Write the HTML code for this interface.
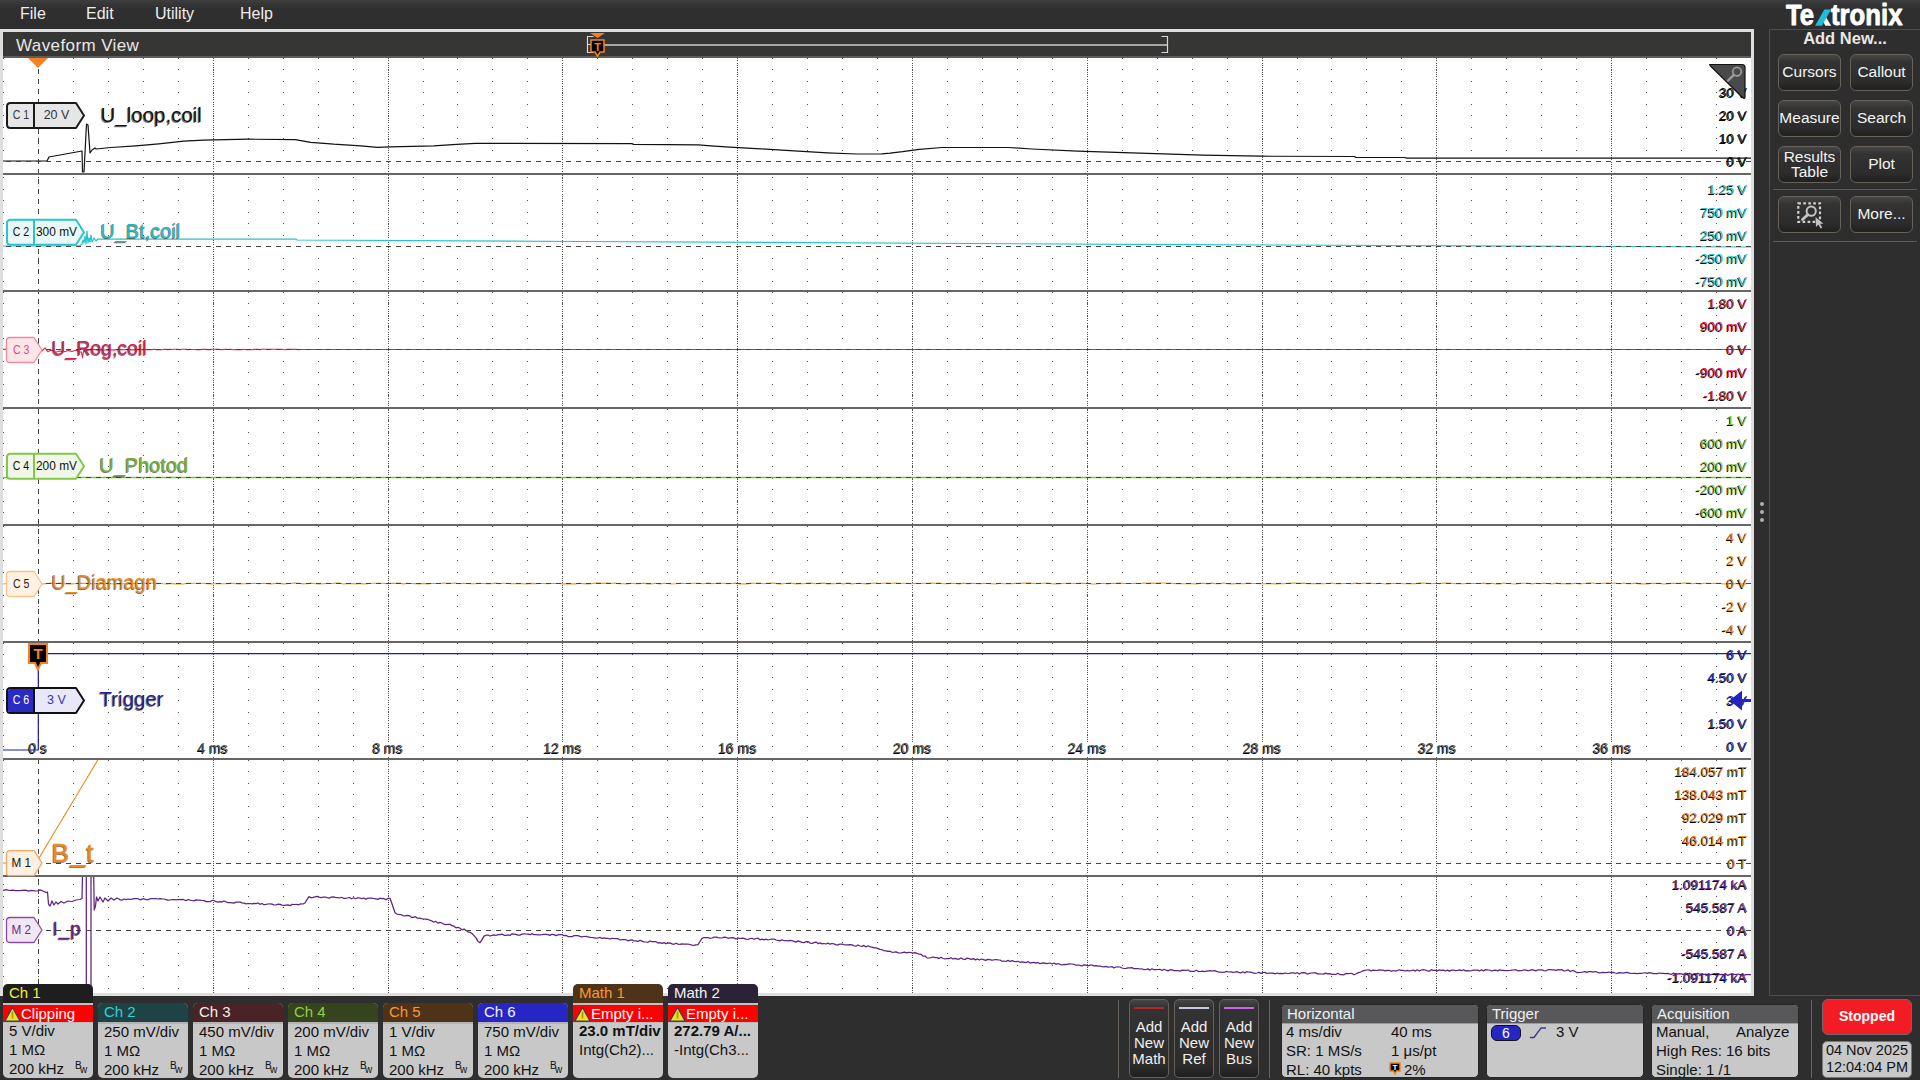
<!DOCTYPE html><html><head><meta charset="utf-8"><title>Tektronix</title><style>
*{margin:0;padding:0;box-sizing:border-box}
html,body{width:1920px;height:1080px;overflow:hidden;background:#2e2e2e;font-family:"Liberation Sans", sans-serif}
.a{position:absolute}
.menu{position:absolute;top:4px;font-size:16px;color:#eeeeee;line-height:20px}
.btn{position:absolute;border:1px solid #67615a;border-radius:6px;background:linear-gradient(#464646 0px,#333333 7px,#2c2c2c 75%,#202020 100%);color:#f4f4f4;font-size:15.5px;text-align:center;display:flex;align-items:center;justify-content:center;line-height:15px;padding-bottom:2px}
.box{position:absolute;width:90px;border-radius:5px;overflow:hidden;background:#c8c8c8}
.box .hd{height:19px;font-size:15px;line-height:19px;padding-left:6px;white-space:nowrap}
.box .ln{font-size:15px;line-height:19px;padding-left:6px;color:#111;white-space:nowrap}
.tab{position:absolute;width:90px;border-radius:5px 5px 0 0}
.ax{position:absolute;right:173px;font-size:13.5px;line-height:14px;white-space:nowrap;text-shadow:-1px 1px 0 #000}
.tl{position:absolute;font-size:14px;line-height:15px;color:#5a5a5a;white-space:nowrap;text-shadow:-1px 1px 0 #000} 
.lab{position:absolute;font-size:20px;line-height:22px;white-space:nowrap;text-shadow:-1px 1px 0 rgba(0,0,0,0.55)}
</style></head><body>
<div class="a" style="left:0;top:0;width:1920px;height:29px;background:linear-gradient(#3e3e3e 0px,#343434 5px,#2f2f2f 9px,#2e2e2e 29px)"></div>
<div class="menu" style="left:20px">File</div>
<div class="menu" style="left:86px">Edit</div>
<div class="menu" style="left:155px">Utility</div>
<div class="menu" style="left:240px">Help</div>
<div class="a" style="left:0;top:29px;width:1754px;height:967px;background:#dedede"></div>
<div class="a" style="left:3px;top:32px;width:1748px;height:24px;background:#363634"></div>
<div class="a" style="left:3px;top:56px;width:1748px;height:2px;background:#5c5c5c"></div>
<div class="a" style="left:3px;top:58px;width:1748px;height:935px;background:#ffffff"></div>
<div class="a" style="left:16px;top:35.5px;font-size:17px;line-height:20px;color:#e8e8e8;letter-spacing:0.4px">Waveform View</div>
<svg class="a" style="left:0;top:0" width="1920" height="1080" viewBox="0 0 1920 1080"><defs><clipPath id="gc"><rect x="3" y="58" width="1748" height="935"/></clipPath></defs><g clip-path="url(#gc)"><path d="M3 58.5H1751M3 69.5H1751M3 81.5H1751M3 92.5H1751M3 104.5H1751M3 115.5H1751M3 127.5H1751M3 138.5H1751M3 150.5H1751M3 173.5H1751M3 177.5H1751M3 189.5H1751M3 200.5H1751M3 212.5H1751M3 223.5H1751M3 235.5H1751M3 258.5H1751M3 269.5H1751M3 281.5H1751M3 292.5H1751M3 303.5H1751M3 315.5H1751M3 326.5H1751M3 338.5H1751M3 361.5H1751M3 372.5H1751M3 384.5H1751M3 395.5H1751M3 407.5H1751M3 409.5H1751M3 420.5H1751M3 432.5H1751M3 443.5H1751M3 455.5H1751M3 466.5H1751M3 478.5H1751M3 489.5H1751M3 501.5H1751M3 512.5H1751M3 524.5H1751M3 526.5H1751M3 537.5H1751M3 549.5H1751M3 560.5H1751M3 572.5H1751M3 595.5H1751M3 606.5H1751M3 618.5H1751M3 629.5H1751M3 641.5H1751M3 643.5H1751M3 654.5H1751M3 666.5H1751M3 677.5H1751M3 689.5H1751M3 700.5H1751M3 712.5H1751M3 723.5H1751M3 735.5H1751M3 746.5H1751M3 758.5H1751M3 760.5H1751M3 771.5H1751M3 783.5H1751M3 794.5H1751M3 806.5H1751M3 817.5H1751M3 829.5H1751M3 840.5H1751M3 852.5H1751M3 875.5H1751M3 884.5H1751M3 896.5H1751M3 907.5H1751M3 919.5H1751M3 942.5H1751M3 953.5H1751M3 965.5H1751M3 976.5H1751M3 988.5H1751" stroke="#525252" stroke-width="1" stroke-dasharray="1 33.96" fill="none" shape-rendering="crispEdges"/><path d="M213.5 58V993M388.5 58V993M562.5 58V993M737.5 58V993M912.5 58V993M1087.5 58V993M1262.5 58V993M1436.5 58V993M1611.5 58V993" stroke="#525252" stroke-width="1" stroke-dasharray="1 1.3" fill="none" shape-rendering="crispEdges"/><path d="M38.5 69V993" stroke="#444" stroke-width="1" stroke-dasharray="5 5" fill="none" shape-rendering="crispEdges"/><rect x="28.0" y="742" width="20" height="15" fill="#ffffff"/><rect x="197.4" y="742" width="31" height="15" fill="#ffffff"/><rect x="372.3" y="742" width="31" height="15" fill="#ffffff"/><rect x="543.2" y="742" width="39" height="15" fill="#ffffff"/><rect x="718.1" y="742" width="39" height="15" fill="#ffffff"/><rect x="893.0" y="742" width="39" height="15" fill="#ffffff"/><rect x="1067.9" y="742" width="39" height="15" fill="#ffffff"/><rect x="1242.8" y="742" width="39" height="15" fill="#ffffff"/><rect x="1417.7" y="742" width="39" height="15" fill="#ffffff"/><rect x="1592.6" y="742" width="39" height="15" fill="#ffffff"/><path d="M3.0 161.0 L47.0 161.0 L49.0 157.0 L82.0 151.0 L82.5 172.0 L84.0 172.0 L86.5 124.0 L88.0 125.0 L90.0 153.0 L92.0 150.0 L95.0 148.0 L96.2 149.0 L110.8 147.5 L135.8 145.8 L158.8 143.8 L183.8 141.2 L203.5 140.2 L248.3 139.2 L295.2 139.6 L310.8 142.3 L333.8 144.2 L360.8 145.8 L377.5 147.3 L390.0 146.9 L433.8 145.8 L456.7 144.4 L475.4 143.3 L490.0 143.4 L631.7 143.6 L633.8 144.4 L698.3 144.8 L710.8 145.8 L729.6 147.1 L760.8 148.8 L798.3 151.2 L827.5 152.9 L856.7 154.0 L881.7 153.8 L890.0 153.1 L902.5 151.7 L919.2 149.4 L942.0 147.5 L1008.8 147.5 L1031.7 149.0 L1077.5 151.2 L1131.7 152.9 L1202.5 155.2 L1260.8 156.2 L1354.6 156.5 L1355.6 157.3 L1404.6 157.5 L1406.7 158.1 L1752.0 158.1" stroke="#111111" stroke-width="1.2" fill="none" stroke-linejoin="round" /><path d="M3.0 246.0 L40.0 246.0 L80.0 245.5 L82.0 244.0 L83.0 240.0 L84.0 243.0 L85.0 236.0 L86.0 244.0 L87.0 231.0 L88.0 243.0 L89.0 238.0 L90.0 242.0 L91.0 235.0 L92.0 242.0 L94.0 238.0 L96.0 241.0 L98.0 239.0 L100.0 239.2 L296.0 239.2 L297.0 240.0 L580.0 241.5 L1180.0 244.6 L1752.0 247.0" stroke="#22c3cc" stroke-width="1.2" fill="none" stroke-linejoin="round" /><path d="M3.0 349.4 L5.1 349.3 L7.1 349.6 L9.2 349.2 L11.2 349.5 L13.3 349.4 L15.3 349.2 L17.4 349.5 L19.4 349.2 L21.5 349.5 L23.6 349.2 L25.6 349.3 L27.7 349.5 L29.7 349.7 L31.8 349.3 L33.8 349.3 L35.9 349.6 L37.9 349.8 L40.0 349.5 L42.0 351.0 L45.0 347.9 L48.0 351.8 L50.0 350.5 L52.0 350.2 L54.0 351.1 L56.0 352.3 L58.0 351.5 L60.0 350.9 L62.0 351.7 L64.0 351.8 L66.0 351.3 L68.0 350.6 L70.0 350.9 L72.0 351.5 L74.0 350.7 L76.0 350.2 L78.0 351.1 L80.0 352.0 L81.5 352.0 L82.5 358.0 L83.5 351.1 L87.0 350.5 L89.5 349.9 L92.0 349.6 L94.0 349.6 L96.0 349.6 L98.0 350.1 L100.0 350.1 L102.0 349.8 L104.0 350.0 L106.0 350.0 L108.0 350.1 L110.0 350.0 L112.0 349.8 L114.0 350.1 L116.0 349.6 L118.0 349.8 L120.0 350.0 L122.0 349.6 L124.0 349.8 L126.0 349.5 L128.0 349.8 L130.0 349.9 L132.0 349.7 L134.0 349.9 L136.0 349.5 L138.0 349.7 L140.0 349.7 L142.0 349.6 L144.0 349.5 L146.0 349.7 L148.0 349.8 L150.0 349.5 L152.0 349.6 L154.0 349.2 L156.0 349.6 L158.0 349.6 L160.0 349.8 L162.0 349.7 L164.0 349.4 L166.0 349.4 L168.0 349.6 L170.0 349.2 L172.0 349.5 L174.0 349.3 L176.0 349.3 L178.0 349.2 L180.0 349.7 L182.0 349.3 L184.0 349.3 L186.0 349.4 L188.0 349.7 L190.0 349.2 L192.0 349.5 L194.0 349.5 L196.0 349.7 L198.0 349.7 L200.0 349.7 L202.0 349.4 L204.0 349.4 L206.0 349.4 L208.0 349.7 L210.0 349.8 L212.0 349.3 L214.0 349.3 L216.0 349.3 L218.0 349.3 L220.0 349.5 L222.0 349.6 L224.0 349.4 L226.0 349.2 L228.0 349.5 L230.0 349.4 L232.0 349.5 L234.0 349.8 L236.0 349.6 L238.0 349.5 L240.0 349.6 L242.0 349.6 L244.0 349.2 L246.0 349.7 L248.0 349.7 L250.0 349.7 L252.0 349.7 L254.0 349.4 L256.0 349.4 L258.0 349.3 L260.0 349.6 L262.0 349.2 L264.0 349.2 L266.0 349.3 L268.0 349.3 L270.0 349.4 L272.0 349.2 L274.0 349.2 L276.0 349.3 L278.0 349.3 L280.0 349.4 L282.0 349.2 L284.0 349.7 L286.0 349.6 L288.0 349.3 L290.0 349.4 L292.0 349.4 L294.0 349.4 L296.0 349.3 L298.0 349.7 L300.0 349.5 L1752.0 349.5" stroke="#dc2a52" stroke-width="1.1" fill="none" stroke-linejoin="round" /><path d="M3.0 477.5 L1752.0 477.5" stroke="#7cc43a" stroke-width="1.3" fill="none" stroke-linejoin="round" /><path d="M3.0 584.0 L7.0 583.5 L11.0 583.5 L15.0 583.1 L19.0 583.1 L23.0 583.3 L27.0 583.3 L31.0 583.8 L35.0 583.2 L39.0 583.0 L43.0 584.0 L47.0 583.5 L51.0 583.1 L55.0 583.5 L59.0 583.0 L63.0 583.5 L67.0 584.0 L71.0 583.9 L75.0 583.7 L79.0 583.3 L83.0 583.4 L87.0 583.2 L91.1 583.8 L95.1 583.5 L99.1 583.8 L103.1 583.3 L107.1 583.2 L111.1 583.8 L115.1 584.0 L119.1 583.9 L123.1 583.8 L127.1 583.8 L131.1 583.7 L135.1 583.2 L139.1 583.5 L143.1 583.4 L147.1 583.0 L151.1 583.0 L155.1 583.3 L159.1 583.3 L163.1 583.7 L167.1 584.0 L171.1 583.4 L175.1 583.9 L179.1 584.0 L183.1 584.0 L187.1 583.4 L191.1 583.2 L195.1 583.2 L199.1 583.2 L203.1 583.2 L207.1 583.6 L211.1 583.9 L215.1 583.8 L219.1 583.5 L223.1 583.7 L227.1 583.8 L231.1 583.1 L235.1 583.7 L239.1 583.9 L243.1 583.8 L247.1 583.8 L251.1 583.5 L255.1 583.2 L259.1 583.8 L263.1 583.3 L267.2 583.8 L271.2 584.0 L275.2 583.4 L279.2 583.4 L283.2 583.9 L287.2 583.7 L291.2 583.2 L295.2 583.1 L299.2 583.2 L303.2 583.9 L307.2 583.8 L311.2 583.1 L315.2 583.8 L319.2 584.0 L323.2 583.7 L327.2 583.4 L331.2 583.5 L335.2 583.1 L339.2 583.0 L343.2 584.0 L347.2 583.6 L351.2 583.5 L355.2 583.9 L359.2 583.4 L363.2 583.9 L367.2 583.8 L371.2 583.2 L375.2 583.3 L379.2 583.3 L383.2 583.2 L387.2 583.6 L391.2 583.3 L395.2 583.4 L399.2 583.1 L403.2 583.9 L407.2 583.4 L411.2 583.5 L415.2 583.6 L419.2 583.9 L423.2 583.4 L427.2 583.9 L431.2 583.5 L435.2 583.5 L439.2 583.5 L443.3 583.0 L447.3 583.4 L451.3 583.2 L455.3 583.0 L459.3 583.8 L463.3 583.2 L467.3 583.5 L471.3 583.7 L475.3 583.6 L479.3 583.3 L483.3 583.5 L487.3 583.6 L491.3 583.8 L495.3 583.1 L499.3 583.6 L503.3 583.2 L507.3 583.3 L511.3 583.8 L515.3 583.5 L519.3 583.6 L523.3 583.8 L527.3 583.9 L531.3 583.4 L535.3 583.6 L539.3 583.5 L543.3 583.5 L547.3 583.7 L551.3 583.5 L555.3 583.5 L559.3 583.5 L563.3 583.9 L567.3 583.7 L571.3 583.9 L575.3 583.9 L579.3 583.3 L583.3 583.6 L587.3 583.9 L591.3 583.8 L595.3 583.1 L599.3 583.1 L603.3 583.4 L607.3 583.1 L611.3 583.2 L615.4 583.1 L619.4 583.7 L623.4 583.8 L627.4 583.9 L631.4 583.2 L635.4 583.7 L639.4 583.7 L643.4 583.1 L647.4 583.9 L651.4 584.0 L655.4 583.2 L659.4 584.0 L663.4 583.4 L667.4 583.5 L671.4 584.0 L675.4 583.8 L679.4 583.2 L683.4 583.4 L687.4 583.5 L691.4 583.3 L695.4 583.2 L699.4 583.3 L703.4 583.7 L707.4 583.0 L711.4 583.6 L715.4 583.4 L719.4 583.0 L723.4 583.3 L727.4 583.6 L731.4 583.5 L735.4 583.1 L739.4 584.0 L743.4 583.8 L747.4 584.0 L751.4 583.1 L755.4 583.3 L759.4 583.0 L763.4 583.8 L767.4 583.3 L771.4 583.1 L775.4 583.4 L779.4 583.9 L783.4 583.8 L787.4 583.3 L791.5 583.1 L795.5 583.9 L799.5 583.6 L803.5 583.7 L807.5 583.1 L811.5 583.1 L815.5 583.7 L819.5 583.4 L823.5 583.1 L827.5 583.9 L831.5 583.6 L835.5 583.8 L839.5 583.1 L843.5 583.9 L847.5 583.1 L851.5 583.9 L855.5 583.5 L859.5 583.3 L863.5 583.6 L867.5 583.9 L871.5 583.3 L875.5 583.1 L879.5 583.5 L883.5 583.2 L887.5 583.1 L891.5 583.2 L895.5 583.1 L899.5 583.2 L903.5 583.3 L907.5 583.3 L911.5 583.8 L915.5 583.3 L919.5 583.5 L923.5 583.2 L927.5 583.3 L931.5 583.0 L935.5 583.3 L939.5 583.0 L943.5 583.7 L947.5 583.6 L951.5 583.2 L955.5 583.5 L959.5 583.9 L963.5 583.1 L967.6 583.8 L971.6 583.4 L975.6 583.5 L979.6 583.8 L983.6 583.4 L987.6 583.5 L991.6 583.7 L995.6 584.0 L999.6 583.3 L1003.6 583.8 L1007.6 583.7 L1011.6 583.6 L1015.6 583.4 L1019.6 583.3 L1023.6 583.1 L1027.6 583.1 L1031.6 583.1 L1035.6 583.7 L1039.6 583.3 L1043.6 583.2 L1047.6 583.1 L1051.6 583.8 L1055.6 583.9 L1059.6 583.7 L1063.6 583.3 L1067.6 583.2 L1071.6 583.3 L1075.6 583.5 L1079.6 583.2 L1083.6 583.4 L1087.6 583.3 L1091.6 584.0 L1095.6 584.0 L1099.6 583.5 L1103.6 583.2 L1107.6 584.0 L1111.6 583.3 L1115.6 583.4 L1119.6 583.0 L1123.6 583.4 L1127.6 583.5 L1131.6 583.5 L1135.6 583.2 L1139.6 583.5 L1143.7 583.0 L1147.7 583.3 L1151.7 583.1 L1155.7 583.4 L1159.7 583.0 L1163.7 583.0 L1167.7 583.3 L1171.7 583.2 L1175.7 583.6 L1179.7 583.5 L1183.7 583.8 L1187.7 583.7 L1191.7 583.7 L1195.7 583.9 L1199.7 583.4 L1203.7 583.3 L1207.7 584.0 L1211.7 583.1 L1215.7 583.7 L1219.7 583.6 L1223.7 583.0 L1227.7 583.8 L1231.7 583.9 L1235.7 583.6 L1239.7 583.7 L1243.7 583.8 L1247.7 583.1 L1251.7 583.5 L1255.7 583.5 L1259.7 583.8 L1263.7 583.8 L1267.7 583.8 L1271.7 583.6 L1275.7 583.9 L1279.7 583.7 L1283.7 583.7 L1287.7 583.2 L1291.7 583.0 L1295.7 583.1 L1299.7 583.4 L1303.7 583.1 L1307.7 583.8 L1311.7 583.6 L1315.8 583.6 L1319.8 583.6 L1323.8 583.7 L1327.8 583.5 L1331.8 583.0 L1335.8 583.8 L1339.8 583.7 L1343.8 583.5 L1347.8 583.5 L1351.8 583.7 L1355.8 583.1 L1359.8 583.7 L1363.8 583.3 L1367.8 583.1 L1371.8 583.3 L1375.8 583.7 L1379.8 583.2 L1383.8 583.7 L1387.8 584.0 L1391.8 583.5 L1395.8 583.4 L1399.8 583.5 L1403.8 583.7 L1407.8 583.8 L1411.8 583.6 L1415.8 583.6 L1419.8 583.1 L1423.8 583.1 L1427.8 583.3 L1431.8 583.7 L1435.8 583.3 L1439.8 583.6 L1443.8 583.0 L1447.8 583.1 L1451.8 583.3 L1455.8 583.7 L1459.8 583.7 L1463.8 583.7 L1467.8 583.3 L1471.8 583.5 L1475.8 583.5 L1479.8 583.5 L1483.8 583.1 L1487.8 583.9 L1491.9 583.2 L1495.9 584.0 L1499.9 583.9 L1503.9 583.0 L1507.9 583.5 L1511.9 583.8 L1515.9 584.0 L1519.9 583.4 L1523.9 583.3 L1527.9 583.2 L1531.9 583.9 L1535.9 583.2 L1539.9 583.6 L1543.9 583.1 L1547.9 583.5 L1551.9 584.0 L1555.9 583.1 L1559.9 583.8 L1563.9 583.5 L1567.9 583.9 L1571.9 583.7 L1575.9 583.2 L1579.9 583.9 L1583.9 583.5 L1587.9 583.0 L1591.9 583.0 L1595.9 583.5 L1599.9 583.5 L1603.9 583.3 L1607.9 583.1 L1611.9 583.3 L1615.9 583.3 L1619.9 583.8 L1623.9 583.0 L1627.9 583.8 L1631.9 583.8 L1635.9 583.1 L1639.9 583.9 L1643.9 583.7 L1647.9 583.9 L1651.9 583.3 L1655.9 583.4 L1659.9 583.4 L1663.9 584.0 L1668.0 583.6 L1672.0 583.4 L1676.0 583.4 L1680.0 583.3 L1684.0 583.0 L1688.0 583.1 L1692.0 583.8 L1696.0 583.3 L1700.0 583.9 L1704.0 583.2 L1708.0 583.3 L1712.0 583.5 L1716.0 583.2 L1720.0 583.4 L1724.0 584.0 L1728.0 583.9 L1732.0 583.8 L1736.0 583.6 L1740.0 583.9 L1744.0 583.9 L1748.0 583.5 L1752.0 583.5" stroke="#f0962a" stroke-width="1.1" fill="none" stroke-linejoin="round" /><path d="M3.0 750.0 L38.3 750.0 L38.3 653.7 L1752.0 653.7" stroke="#1c1ca8" stroke-width="1.2" fill="none" stroke-linejoin="round" /><path d="M3.0 863.0 L36.0 863.0 L99.0 758.0" stroke="#ee8a1e" stroke-width="1.1" fill="none" stroke-linejoin="round" /><path d="M3.0 890.3 L6.2 889.6 L9.4 890.5 L12.5 890.2 L15.7 890.7 L18.9 890.6 L22.1 890.3 L25.3 890.1 L28.5 891.2 L31.6 890.4 L34.8 890.9 L38.0 891.0 L40.0 889.8 L43.0 891.0 L46.0 892.5 L47.5 892.0 L48.5 904.0 L50.0 906.0 L52.0 901.0 L54.0 905.0 L56.0 902.0 L58.0 904.0 L61.0 901.5 L64.0 903.0 L68.0 901.0 L72.0 901.5 L76.0 900.0 L80.0 899.5 L82.0 898.5 L82.5 876.0 L86.3 876.0 L86.3 995.0 L91.0 995.0 L91.0 876.0 L93.7 876.0 L94.2 910.0 L95.5 906.0 L96.5 897.0 L98.0 901.0 L100.0 897.0 L103.0 902.0 L105.0 898.0 L108.0 901.0 L111.0 898.0 L114.0 900.0 L117.0 898.0 L120.0 899.5 L120.0 899.9 L122.0 900.2 L124.0 899.0 L126.0 899.6 L128.0 899.0 L130.0 899.4 L132.0 899.1 L134.0 898.7 L136.0 898.7 L138.0 898.7 L140.0 899.8 L142.0 899.1 L144.0 898.7 L146.0 899.7 L148.0 899.8 L150.0 898.9 L152.0 898.5 L154.0 898.6 L156.0 898.5 L158.0 899.0 L160.0 898.6 L162.0 898.9 L164.0 899.0 L166.0 899.6 L168.0 900.2 L170.0 900.0 L172.0 899.5 L174.0 899.6 L176.0 899.8 L178.0 899.6 L180.0 899.6 L182.0 899.3 L184.0 899.7 L186.0 900.8 L188.0 899.5 L190.0 900.2 L192.0 900.5 L194.0 900.9 L196.0 899.9 L198.0 900.1 L200.0 900.1 L202.0 900.5 L204.0 900.6 L206.0 901.6 L208.0 901.5 L210.0 901.7 L212.0 900.4 L214.0 900.5 L216.0 901.7 L218.0 902.1 L220.0 901.6 L222.0 901.9 L224.0 901.0 L226.0 901.8 L228.0 902.7 L230.0 902.7 L232.0 902.8 L234.0 903.1 L236.0 902.1 L238.0 902.0 L240.0 902.2 L242.0 902.9 L244.0 903.2 L246.0 903.8 L248.0 903.5 L250.0 903.5 L252.0 903.8 L254.0 903.4 L256.0 903.7 L258.0 903.0 L260.0 904.3 L262.0 903.5 L264.0 904.7 L266.0 904.4 L268.0 904.0 L270.0 903.8 L272.0 904.1 L274.0 904.8 L276.0 905.0 L278.0 904.2 L280.0 904.3 L282.0 905.1 L284.0 905.3 L286.0 905.1 L288.0 904.9 L290.0 905.7 L292.1 904.4 L294.3 904.5 L296.4 904.4 L298.6 904.8 L300.7 903.9 L302.9 904.0 L305.0 903.0 L307.0 899.6 L309.0 896.6 L311.0 897.8 L313.1 897.4 L315.1 896.8 L317.1 896.4 L319.1 897.2 L321.1 897.6 L323.2 897.2 L325.2 897.0 L327.2 897.7 L329.2 898.2 L331.3 897.1 L333.3 896.9 L335.3 897.4 L337.4 897.6 L339.4 898.0 L341.4 897.3 L343.4 898.3 L345.4 898.3 L347.5 898.0 L349.5 897.5 L351.5 898.8 L353.6 897.8 L355.6 898.7 L357.6 897.8 L359.6 897.8 L361.6 898.7 L363.7 898.0 L365.7 899.1 L367.7 898.4 L369.8 898.0 L371.8 898.1 L373.8 898.5 L375.8 898.9 L377.9 899.4 L379.9 898.2 L381.9 898.6 L383.9 898.4 L385.9 899.7 L388.0 898.4 L390.0 898.3 L392.5 905.3 L395.0 912.8 L397.0 914.1 L399.1 914.5 L401.1 914.7 L403.1 915.6 L405.2 915.9 L407.2 915.4 L409.3 915.6 L411.3 917.3 L413.3 917.4 L415.4 916.7 L417.4 918.2 L419.4 918.1 L421.5 918.6 L423.5 919.0 L425.6 919.1 L427.6 919.3 L429.6 920.2 L431.7 920.8 L433.7 922.2 L435.7 921.3 L437.8 923.1 L439.8 922.3 L441.9 923.0 L443.9 924.2 L445.9 924.6 L448.0 924.4 L450.0 924.3 L452.0 925.7 L454.0 926.2 L456.0 927.8 L458.0 927.3 L460.0 928.3 L462.0 929.8 L464.0 929.1 L466.0 930.5 L468.0 931.8 L470.0 932.4 L472.0 933.5 L474.0 935.7 L476.0 937.9 L478.0 941.5 L480.0 942.6 L482.0 939.6 L484.0 936.1 L486.0 935.2 L488.0 935.0 L490.0 936.0 L492.0 935.4 L494.0 934.8 L496.0 935.5 L498.0 934.7 L500.0 934.6 L502.0 934.1 L504.0 935.3 L506.0 935.4 L508.0 934.9 L510.0 935.4 L512.0 933.8 L514.0 934.1 L516.0 934.4 L518.0 935.1 L520.0 935.1 L522.0 934.1 L524.0 933.8 L526.0 934.0 L528.0 934.1 L530.0 934.7 L532.0 933.6 L534.0 934.7 L536.0 934.7 L538.0 934.9 L540.0 934.9 L542.0 934.7 L544.0 934.4 L546.0 934.4 L548.0 934.6 L550.0 935.4 L552.0 934.3 L554.0 934.6 L556.0 935.6 L558.0 934.9 L560.0 934.7 L562.0 934.7 L564.0 935.6 L566.0 935.4 L568.0 936.5 L570.0 936.5 L572.0 936.7 L574.0 935.6 L576.0 935.5 L578.0 935.6 L580.0 936.3 L582.0 936.8 L584.0 936.5 L586.0 936.3 L588.0 936.8 L590.0 937.3 L592.0 937.5 L594.0 937.8 L596.0 938.1 L598.0 938.0 L600.0 937.3 L602.0 938.6 L604.0 937.8 L606.0 938.4 L608.0 938.3 L610.0 939.0 L612.0 938.3 L614.0 938.5 L616.0 938.7 L618.0 938.7 L620.0 940.0 L622.0 939.7 L624.0 939.5 L626.0 939.7 L628.0 940.8 L630.0 940.2 L632.0 939.9 L634.0 941.0 L636.0 940.9 L638.0 941.6 L640.0 940.3 L642.0 941.1 L644.0 941.8 L646.0 942.0 L648.0 942.3 L650.0 941.0 L652.0 941.6 L654.0 941.5 L656.0 941.7 L658.0 943.1 L660.0 942.7 L662.0 943.4 L664.0 942.6 L666.0 943.6 L668.0 943.1 L670.0 942.9 L672.0 943.9 L674.0 944.3 L676.0 943.2 L678.0 944.1 L680.0 944.3 L682.0 943.8 L684.0 944.2 L686.0 944.0 L688.0 944.2 L690.0 944.5 L692.0 945.2 L694.0 945.4 L696.0 944.9 L698.0 944.7 L700.0 941.5 L702.0 938.3 L704.0 937.5 L706.0 937.7 L708.0 937.5 L710.0 938.4 L712.0 938.0 L714.0 937.2 L716.0 937.2 L718.0 937.7 L720.0 937.9 L722.0 938.0 L724.0 937.1 L726.0 937.3 L728.0 938.3 L730.0 937.9 L732.0 937.7 L734.0 937.9 L736.0 939.0 L738.0 938.0 L740.0 938.5 L742.0 938.2 L744.0 938.4 L746.0 939.2 L748.0 939.5 L750.0 938.5 L752.0 938.3 L754.0 939.3 L756.0 938.5 L758.0 938.2 L760.0 939.8 L762.0 939.1 L764.0 939.8 L766.0 939.2 L768.0 940.0 L770.0 939.5 L772.0 939.1 L774.0 939.0 L776.0 940.0 L778.0 940.3 L780.0 940.9 L782.0 939.7 L784.0 940.7 L786.0 940.5 L788.0 940.8 L790.0 940.4 L792.0 940.7 L794.0 941.3 L796.0 942.1 L798.0 940.9 L800.0 941.6 L802.0 942.3 L804.0 942.7 L806.0 941.6 L808.0 941.6 L810.0 943.1 L812.0 943.3 L814.0 942.6 L816.0 942.1 L818.0 943.6 L820.0 942.9 L822.0 943.9 L824.0 943.5 L826.0 944.0 L828.0 943.1 L830.0 944.2 L832.0 943.5 L834.0 943.9 L836.0 944.8 L838.0 944.9 L840.0 944.0 L842.0 944.2 L844.0 944.6 L846.0 944.9 L848.0 944.9 L850.0 944.6 L852.0 944.9 L854.0 945.8 L856.0 946.2 L858.0 945.0 L860.0 946.0 L862.0 946.4 L864.0 945.4 L866.0 946.9 L868.0 945.8 L870.0 946.8 L872.0 947.2 L874.0 947.9 L876.0 947.9 L878.0 948.6 L880.0 949.4 L882.0 949.7 L884.0 950.6 L886.0 950.8 L888.0 951.4 L890.0 951.2 L892.1 952.3 L894.2 952.2 L896.2 951.9 L898.3 952.9 L900.4 953.0 L902.5 952.6 L904.5 952.2 L906.6 952.8 L908.7 952.3 L910.8 952.5 L912.8 953.1 L914.9 952.6 L917.0 953.3 L919.0 954.2 L921.0 954.3 L923.0 956.1 L925.0 956.0 L927.0 957.9 L929.0 958.0 L931.0 957.6 L933.0 957.0 L935.0 957.7 L937.0 957.6 L939.0 958.6 L941.0 957.3 L943.0 958.5 L945.0 958.8 L947.0 958.5 L949.0 958.7 L951.0 957.7 L953.0 959.0 L955.0 958.3 L957.0 959.1 L959.0 959.1 L961.0 958.0 L963.1 959.1 L965.1 959.4 L967.2 958.1 L969.2 958.7 L971.3 959.4 L973.3 958.6 L975.4 959.9 L977.4 959.0 L979.5 960.0 L981.5 959.0 L983.6 959.7 L985.6 960.4 L987.7 959.4 L989.7 959.6 L991.8 960.1 L993.8 959.9 L995.9 959.5 L997.9 959.9 L1000.0 960.0 L1002.0 961.3 L1004.0 961.0 L1006.0 961.5 L1008.0 960.4 L1010.0 961.5 L1012.0 960.6 L1014.0 961.4 L1016.0 961.7 L1018.0 961.3 L1020.0 962.3 L1022.0 961.9 L1024.0 962.1 L1026.0 962.7 L1028.0 961.5 L1030.0 963.1 L1032.0 962.6 L1034.0 962.3 L1036.0 963.1 L1038.0 962.4 L1040.0 963.7 L1042.0 963.1 L1044.0 962.9 L1046.0 963.7 L1048.0 963.3 L1050.0 963.0 L1052.0 964.0 L1054.0 963.0 L1056.0 964.3 L1058.0 963.5 L1060.0 964.3 L1062.0 965.0 L1064.0 964.4 L1066.0 964.7 L1068.0 964.2 L1070.0 963.9 L1072.0 964.0 L1074.0 964.3 L1076.0 965.2 L1078.0 965.0 L1080.0 965.3 L1082.0 966.0 L1084.0 964.9 L1086.0 965.2 L1088.0 966.0 L1090.0 965.1 L1092.0 965.2 L1094.0 965.8 L1096.0 965.6 L1098.0 966.1 L1100.0 966.0 L1102.0 966.7 L1104.0 966.8 L1106.0 966.3 L1108.0 967.1 L1110.0 967.0 L1112.0 966.6 L1114.0 968.0 L1116.0 967.0 L1118.0 966.9 L1120.0 967.0 L1122.0 968.0 L1124.0 968.5 L1126.0 968.4 L1128.0 967.9 L1130.0 967.8 L1132.0 967.6 L1134.0 968.7 L1136.0 968.7 L1138.0 968.5 L1140.0 969.0 L1142.0 968.8 L1144.0 969.7 L1146.0 969.5 L1148.0 968.9 L1150.0 970.1 L1152.0 968.8 L1154.0 969.7 L1156.0 969.6 L1158.0 969.5 L1160.0 969.3 L1162.0 970.5 L1164.0 969.3 L1166.1 970.2 L1168.1 970.9 L1170.1 969.7 L1172.1 969.8 L1174.1 970.6 L1176.2 970.5 L1178.2 970.7 L1180.2 971.1 L1182.2 970.1 L1184.2 970.4 L1186.3 970.4 L1188.3 970.0 L1190.3 971.4 L1192.3 971.3 L1194.3 971.3 L1196.4 970.2 L1198.4 971.6 L1200.4 971.5 L1202.4 971.1 L1204.4 971.6 L1206.5 971.2 L1208.5 970.9 L1210.5 970.7 L1212.5 971.0 L1214.5 970.7 L1216.5 971.3 L1218.6 972.0 L1220.6 972.0 L1222.6 972.3 L1224.6 972.1 L1226.6 971.4 L1228.7 972.0 L1230.7 971.8 L1232.7 972.4 L1234.7 972.1 L1236.7 971.7 L1238.8 972.4 L1240.8 972.9 L1242.8 971.8 L1244.8 972.9 L1246.8 971.6 L1248.9 972.0 L1250.9 972.0 L1252.9 972.9 L1254.9 973.3 L1256.9 973.0 L1259.0 972.4 L1261.0 973.4 L1263.0 972.5 L1265.0 972.4 L1267.0 973.5 L1269.1 973.1 L1271.1 973.2 L1273.1 973.2 L1275.1 973.8 L1277.2 973.0 L1279.2 973.6 L1281.2 973.4 L1283.2 973.7 L1285.2 973.0 L1287.3 973.5 L1289.3 973.3 L1291.3 972.9 L1293.3 972.8 L1295.4 973.5 L1297.4 972.7 L1299.4 974.0 L1301.4 972.8 L1303.4 972.7 L1305.5 972.8 L1307.5 974.2 L1309.5 973.3 L1311.5 973.0 L1313.6 972.8 L1315.6 972.9 L1317.6 973.9 L1319.6 973.9 L1321.6 974.0 L1323.7 974.1 L1325.7 973.1 L1327.7 973.9 L1329.7 973.6 L1331.8 974.4 L1333.8 974.4 L1335.8 974.5 L1337.8 973.3 L1339.8 974.6 L1341.9 974.7 L1343.9 974.8 L1345.9 973.4 L1347.9 973.6 L1350.0 973.5 L1352.0 973.4 L1354.0 974.8 L1356.2 973.8 L1358.5 972.6 L1360.8 972.0 L1363.0 970.8 L1365.0 970.3 L1367.0 970.0 L1369.0 969.9 L1371.0 971.0 L1373.0 970.1 L1375.1 970.3 L1377.1 970.5 L1379.1 969.8 L1381.1 970.2 L1383.1 970.2 L1385.1 970.9 L1387.1 970.3 L1389.1 970.3 L1391.1 971.3 L1393.1 970.5 L1395.2 971.1 L1397.2 970.7 L1399.2 969.8 L1401.2 970.4 L1403.2 970.4 L1405.2 971.0 L1407.2 970.3 L1409.2 970.8 L1411.2 970.6 L1413.2 970.0 L1415.3 971.1 L1417.3 969.8 L1419.3 971.0 L1421.3 970.0 L1423.3 969.7 L1425.3 970.0 L1427.3 970.9 L1429.3 971.2 L1431.3 969.7 L1433.3 970.4 L1435.4 970.4 L1437.4 970.9 L1439.4 969.9 L1441.4 970.4 L1443.4 970.2 L1445.4 971.0 L1447.4 970.1 L1449.4 971.1 L1451.4 970.1 L1453.4 970.0 L1455.5 970.7 L1457.5 970.4 L1459.5 969.8 L1461.5 970.6 L1463.5 969.7 L1465.5 970.9 L1467.5 970.7 L1469.5 970.8 L1471.5 970.6 L1473.5 970.2 L1475.6 970.2 L1477.6 970.2 L1479.6 971.0 L1481.6 969.7 L1483.6 971.0 L1485.6 969.6 L1487.6 969.9 L1489.6 970.0 L1491.6 971.0 L1493.6 970.3 L1495.7 970.1 L1497.7 970.9 L1499.7 969.9 L1501.7 970.3 L1503.7 970.4 L1505.7 970.7 L1507.7 970.7 L1509.7 970.5 L1511.7 970.1 L1513.7 970.0 L1515.8 969.7 L1517.8 970.8 L1519.8 970.6 L1521.8 970.7 L1523.8 969.8 L1525.8 970.2 L1527.8 970.7 L1529.8 970.4 L1531.8 969.7 L1533.8 970.2 L1535.9 970.9 L1537.9 969.8 L1539.9 969.8 L1541.9 969.9 L1543.9 970.6 L1545.9 970.8 L1547.9 969.7 L1549.9 969.7 L1551.9 969.8 L1553.9 969.9 L1556.0 970.3 L1558.0 969.7 L1560.0 969.9 L1562.0 969.7 L1564.0 971.0 L1566.0 970.6 L1568.2 969.9 L1570.3 971.5 L1572.5 970.5 L1574.7 971.2 L1576.8 972.5 L1579.0 972.5 L1581.0 972.4 L1583.0 972.0 L1585.0 971.6 L1587.0 972.4 L1589.1 971.5 L1591.1 971.7 L1593.1 972.1 L1595.1 971.5 L1597.1 972.2 L1599.1 972.8 L1601.1 972.7 L1603.1 972.4 L1605.2 972.7 L1607.2 972.4 L1609.2 972.0 L1611.2 972.7 L1613.2 972.4 L1615.2 973.0 L1617.2 973.3 L1619.2 972.6 L1621.2 972.9 L1623.3 973.2 L1625.3 972.7 L1627.3 972.4 L1629.3 973.2 L1631.3 973.5 L1633.3 973.4 L1635.3 973.3 L1637.3 973.6 L1639.3 973.3 L1641.4 973.3 L1643.4 973.0 L1645.4 972.9 L1647.4 973.4 L1649.4 972.6 L1651.4 973.1 L1653.4 973.7 L1655.4 973.7 L1657.5 973.6 L1659.5 973.0 L1661.5 973.3 L1663.5 973.4 L1665.5 973.7 L1667.5 973.4 L1669.5 973.9 L1671.5 974.3 L1673.5 973.1 L1675.6 973.9 L1677.6 974.2 L1679.6 973.6 L1681.6 973.8 L1683.6 974.6 L1685.6 973.1 L1687.6 974.0 L1689.6 973.4 L1691.7 974.4 L1693.7 974.7 L1695.7 974.1 L1697.7 973.4 L1699.7 974.2 L1701.7 974.2 L1703.7 974.5 L1705.7 974.2 L1707.7 974.5 L1709.8 974.8 L1711.8 974.3 L1713.8 974.2 L1715.8 975.1 L1717.8 973.9 L1719.8 974.7 L1721.8 974.3 L1723.8 974.9 L1725.8 973.9 L1727.9 975.4 L1729.9 974.4 L1731.9 973.9 L1733.9 974.3 L1735.9 974.6 L1737.9 974.0 L1739.9 974.7 L1741.9 974.7 L1744.0 975.2 L1746.0 974.7 L1748.0 974.6 L1750.0 974.5 L1752.0 975.0" stroke="#5e2282" stroke-width="1.25" fill="none" stroke-linejoin="round" /><path d="M3 161.5H1751" stroke="#444" stroke-width="1" stroke-dasharray="5 5" stroke-dashoffset="7" fill="none" shape-rendering="crispEdges"/><path d="M3 246.5H1751" stroke="#444" stroke-width="1" stroke-dasharray="5 5" stroke-dashoffset="7" fill="none" shape-rendering="crispEdges"/><path d="M3 349.5H1751" stroke="#444" stroke-width="1" stroke-dasharray="5 5" stroke-dashoffset="7" fill="none" shape-rendering="crispEdges"/><path d="M3 477.5H1751" stroke="#444" stroke-width="1" stroke-dasharray="5 5" stroke-dashoffset="7" fill="none" shape-rendering="crispEdges"/><path d="M3 583.5H1751" stroke="#444" stroke-width="1" stroke-dasharray="5 5" stroke-dashoffset="7" fill="none" shape-rendering="crispEdges"/><path d="M3 863.5H1751" stroke="#444" stroke-width="1" stroke-dasharray="5 5" stroke-dashoffset="7" fill="none" shape-rendering="crispEdges"/><path d="M3 930.5H1751" stroke="#444" stroke-width="1" stroke-dasharray="5 5" stroke-dashoffset="7" fill="none" shape-rendering="crispEdges"/><rect x="3" y="173" width="1748" height="2" fill="#666666"/><rect x="3" y="290" width="1748" height="2" fill="#666666"/><rect x="3" y="407" width="1748" height="2" fill="#666666"/><rect x="3" y="524" width="1748" height="2" fill="#666666"/><rect x="3" y="641" width="1748" height="2" fill="#666666"/><rect x="3" y="758" width="1748" height="2" fill="#666666"/><rect x="3" y="875" width="1748" height="2" fill="#666666"/></g></svg>
<svg class="a" style="left:0;top:0" width="1920" height="1080" viewBox="0 0 1920 1080"><path d="M28 58H48L38 68Z" fill="#f5821f"/><path d="M593.5 36.5H587.5V52.5H593.5M587.5 44.5H593" stroke="#d8d8d8" stroke-width="1.2" fill="none"/><rect x="593" y="44" width="574" height="2" fill="#a8a8a8"/><path d="M1161.5 36.5H1167.5V52.5H1161.5" stroke="#d8d8d8" stroke-width="1.2" fill="none"/><path d="M590 33H605L597.5 38Z" fill="#f5821f"/><path d="M591 40H604V52H600L597.5 56L595 52H591Z" fill="#000" stroke="#f5821f" stroke-width="1.5"/><text x="597.5" y="50.5" font-family="Liberation Sans" font-weight="bold" font-size="11" fill="#f5821f" text-anchor="middle">T</text><path d="M10.5 103.0H76L84 115.5L76 128.0H10.5Q7 128.0 7 124.5V106.5Q7 103.0 10.5 103.0Z" fill="#e6e6e6" stroke="#1a1a1a" stroke-width="2" stroke-linejoin="round"/><rect x="33" y="103.0" width="2" height="25" fill="#1a1a1a"/><text x="21.0" y="119.3" font-family="Liberation Sans" font-size="12.5" fill="#333" text-anchor="middle" textLength="16.5" lengthAdjust="spacingAndGlyphs">C 1</text><text x="56.5" y="119.3" font-family="Liberation Sans" font-size="12.5" fill="#333" text-anchor="middle">20 V</text><path d="M10.5 219.8H76L84 232.3L76 244.8H10.5Q7 244.8 7 241.3V223.3Q7 219.8 10.5 219.8Z" fill="#e8f8f8" stroke="#2cc4cc" stroke-width="2" stroke-linejoin="round"/><rect x="33" y="219.8" width="2" height="25" fill="#2cc4cc"/><text x="21.0" y="236.10000000000002" font-family="Liberation Sans" font-size="12.5" fill="#111" text-anchor="middle" textLength="16.5" lengthAdjust="spacingAndGlyphs">C 2</text><text x="56.5" y="236.10000000000002" font-family="Liberation Sans" font-size="12.5" fill="#111" text-anchor="middle" textLength="41" lengthAdjust="spacingAndGlyphs">300 mV</text><path d="M10.0 337.5H34.0L42.0 350L34.0 362.5H10.0Q6.5 362.5 6.5 359.0V341.0Q6.5 337.5 10.0 337.5Z" fill="#fde6ea" stroke="#f08a9c" stroke-width="1.3" stroke-linejoin="round"/><text x="21.25" y="353.8" font-family="Liberation Sans" font-size="12.5" fill="#e05070" text-anchor="middle" textLength="16.5" lengthAdjust="spacingAndGlyphs">C 3</text><path d="M10.5 453.7H76L84 466.2L76 478.7H10.5Q7 478.7 7 475.2V457.2Q7 453.7 10.5 453.7Z" fill="#f0f7e8" stroke="#84c84a" stroke-width="2" stroke-linejoin="round"/><rect x="33" y="453.7" width="2" height="25" fill="#84c84a"/><text x="21.0" y="470.0" font-family="Liberation Sans" font-size="12.5" fill="#111" text-anchor="middle" textLength="16.5" lengthAdjust="spacingAndGlyphs">C 4</text><text x="56.5" y="470.0" font-family="Liberation Sans" font-size="12.5" fill="#111" text-anchor="middle" textLength="41" lengthAdjust="spacingAndGlyphs">200 mV</text><path d="M10.0 571.5H34.0L42.0 584L34.0 596.5H10.0Q6.5 596.5 6.5 593.0V575.0Q6.5 571.5 10.0 571.5Z" fill="#fff2e4" stroke="#f8c48c" stroke-width="1.3" stroke-linejoin="round"/><text x="21.25" y="587.8" font-family="Liberation Sans" font-size="12.5" fill="#222" text-anchor="middle" textLength="16.5" lengthAdjust="spacingAndGlyphs">C 5</text><path d="M10.5 688.0H76L84 700.5L76 713.0H10.5Q7 713.0 7 709.5V691.5Q7 688.0 10.5 688.0Z" fill="#e8e8f8" stroke="#111" stroke-width="2" stroke-linejoin="round"/><path d="M10.5 689.0H34V712.0H10.5Q8 712.0 8 709.5V691.5Q8 689.0 10.5 689.0Z" fill="#2a2ac4"/><rect x="33" y="688.0" width="2" height="25" fill="#111"/><text x="21.0" y="704.3" font-family="Liberation Sans" font-size="12.5" fill="#fff" text-anchor="middle" textLength="16.5" lengthAdjust="spacingAndGlyphs">C 6</text><text x="56.5" y="704.3" font-family="Liberation Sans" font-size="12.5" fill="#3535b8" text-anchor="middle">3 V</text><path d="M10.0 850.7H34.0L42.0 863.2L34.0 875.7H10.0Q6.5 875.7 6.5 872.2V854.2Q6.5 850.7 10.0 850.7Z" fill="#fdf0e2" stroke="#f2a860" stroke-width="1.3" stroke-linejoin="round"/><text x="21.25" y="867.0" font-family="Liberation Sans" font-size="12.5" fill="#111" text-anchor="middle" textLength="19.5" lengthAdjust="spacingAndGlyphs">M 1</text><path d="M10.0 917.5H34.0L42.0 930L34.0 942.5H10.0Q6.5 942.5 6.5 939.0V921.0Q6.5 917.5 10.0 917.5Z" fill="#f0e6f4" stroke="#8a4aa8" stroke-width="1.3" stroke-linejoin="round"/><text x="21.25" y="933.8" font-family="Liberation Sans" font-size="12.5" fill="#6a2a8c" text-anchor="middle" textLength="19.5" lengthAdjust="spacingAndGlyphs">M 2</text><path d="M29 644H47V663H41L38 669.5L35 663H29Z" fill="#000" stroke="#f5821f" stroke-width="2"/><text x="38" y="659" font-family="Liberation Sans" font-weight="bold" font-size="15" fill="#f5821f" text-anchor="middle">T</text></svg>
<div class="lab" style="left:100.5px;top:103px;color:#151515;font-size:20.5px;line-height:24px">U_loop,coil</div>
<div class="lab" style="left:100.5px;top:219px;color:#22b8c4;font-size:20px;line-height:24px">U_Bt,coil</div>
<div class="lab" style="left:51.5px;top:336px;color:#d02650;font-size:19.5px;line-height:24px">U_Rog,coil</div>
<div class="lab" style="left:99.5px;top:453px;color:#74b432;font-size:20px;line-height:24px">U_Photod</div>
<div class="lab" style="left:51.5px;top:570px;color:#ec8a22;font-size:20px;line-height:24px">U_Diamagn</div>
<div class="lab" style="left:99.5px;top:687px;color:#22228a;font-size:20.5px;line-height:24px">Trigger</div>
<div class="lab" style="left:51.5px;top:841px;color:#ec8a22;font-size:26.5px;line-height:24px;-webkit-text-stroke:0.6px #ec8a22;letter-spacing:1.2px">B_t</div>
<div class="lab" style="left:52.5px;top:916.5px;color:#5e2282;font-size:19px;line-height:24px;letter-spacing:1px;-webkit-text-stroke:0.3px #5e2282">I_p</div>
<div class="ax" style="top:86px;color:#111">30 V</div>
<div class="ax" style="top:109px;color:#111">20 V</div>
<div class="ax" style="top:132px;color:#111">10 V</div>
<div class="ax" style="top:155px;color:#111">0 V</div>
<div class="ax" style="top:183px;color:#22c4cc">1.25 V</div>
<div class="ax" style="top:206px;color:#22c4cc">750 mV</div>
<div class="ax" style="top:229px;color:#22c4cc">250 mV</div>
<div class="ax" style="top:252px;color:#22c4cc">-250 mV</div>
<div class="ax" style="top:275px;color:#22c4cc">-750 mV</div>
<div class="ax" style="top:297px;color:#d8244c">1.80 V</div>
<div class="ax" style="top:320px;color:#d8244c">900 mV</div>
<div class="ax" style="top:343px;color:#d8244c">0 V</div>
<div class="ax" style="top:366px;color:#d8244c">-900 mV</div>
<div class="ax" style="top:389px;color:#d8244c">-1.80 V</div>
<div class="ax" style="top:414px;color:#7cc43a">1 V</div>
<div class="ax" style="top:437px;color:#7cc43a">600 mV</div>
<div class="ax" style="top:460px;color:#7cc43a">200 mV</div>
<div class="ax" style="top:483px;color:#7cc43a">-200 mV</div>
<div class="ax" style="top:506px;color:#7cc43a">-600 mV</div>
<div class="ax" style="top:531px;color:#f0962a">4 V</div>
<div class="ax" style="top:554px;color:#f0962a">2 V</div>
<div class="ax" style="top:577px;color:#f0962a">0 V</div>
<div class="ax" style="top:600px;color:#f0962a">-2 V</div>
<div class="ax" style="top:623px;color:#f0962a">-4 V</div>
<div class="ax" style="top:648px;color:#2a2ab0">6 V</div>
<div class="ax" style="top:671px;color:#2a2ab0">4.50 V</div>
<div class="ax" style="top:694px;color:#2a2ab0">3 V</div>
<div class="ax" style="top:717px;color:#2a2ab0">1.50 V</div>
<div class="ax" style="top:740px;color:#2a2ab0">0 V</div>
<div class="ax" style="top:765px;color:#e8841e">184.057 mT</div>
<div class="ax" style="top:788px;color:#e8841e">138.043 mT</div>
<div class="ax" style="top:811px;color:#e8841e">92.029 mT</div>
<div class="ax" style="top:834px;color:#e8841e">46.014 mT</div>
<div class="ax" style="top:857px;color:#e8841e">0 T</div>
<div class="ax" style="top:878px;color:#6a2a8c">1.091174 kA</div>
<div class="ax" style="top:901px;color:#6a2a8c">545.587 A</div>
<div class="ax" style="top:924px;color:#6a2a8c">0 A</div>
<div class="ax" style="top:947px;color:#6a2a8c">-545.587 A</div>
<div class="ax" style="top:971px;color:#6a2a8c">-1.091174 kA</div>
<svg class="a" style="left:1720px;top:685px" width="35" height="30"><path d="M9.5 15.5L22 5.5V14H31V17H22V25.5Z" fill="#2424c0"/></svg>
<svg class="a" style="left:0;top:0" width="1920" height="1080" viewBox="0 0 1920 1080"><path d="M1710 64.5H1742Q1745 64.5 1745 67.5V97Q1745 99.5 1742.5 97.5L1710.5 66Q1709 64.5 1710 64.5Z" fill="#4a4a4a" stroke="#111" stroke-width="1.2"/><circle cx="1737" cy="71.6" r="4.3" fill="none" stroke="#9a9a9a" stroke-width="1.7"/><path d="M1733.8 74.8L1728 80.6" stroke="#9a9a9a" stroke-width="2.4" stroke-linecap="round"/></svg>
<div class="tl" style="left:-2.0px;width:80px;text-align:center;top:741px"><span>0 s</span></div>
<div class="tl" style="left:172.9px;width:80px;text-align:center;top:741px"><span>4 ms</span></div>
<div class="tl" style="left:347.8px;width:80px;text-align:center;top:741px"><span>8 ms</span></div>
<div class="tl" style="left:522.7px;width:80px;text-align:center;top:741px"><span>12 ms</span></div>
<div class="tl" style="left:697.6px;width:80px;text-align:center;top:741px"><span>16 ms</span></div>
<div class="tl" style="left:872.5px;width:80px;text-align:center;top:741px"><span>20 ms</span></div>
<div class="tl" style="left:1047.4px;width:80px;text-align:center;top:741px"><span>24 ms</span></div>
<div class="tl" style="left:1222.3px;width:80px;text-align:center;top:741px"><span>28 ms</span></div>
<div class="tl" style="left:1397.2px;width:80px;text-align:center;top:741px"><span>32 ms</span></div>
<div class="tl" style="left:1572.1px;width:80px;text-align:center;top:741px"><span>36 ms</span></div>
<div class="a" style="left:1769px;top:29px;width:151px;height:967px;border-left:1px solid #4e4e4e;border-top:1px solid #4e4e4e;border-bottom:1px solid #4e4e4e"></div>
<svg class="a" style="left:1775px;top:0" width="140" height="30" viewBox="0 0 140 30"><g stroke="#fff" stroke-width="0.9" stroke-linejoin="round"><text x="11" y="25" font-family="Liberation Sans" font-weight="bold" font-size="30" fill="#ffffff" textLength="28" lengthAdjust="spacingAndGlyphs">Te</text><text x="56" y="25" font-family="Liberation Sans" font-weight="bold" font-size="30" fill="#ffffff" textLength="71.5" lengthAdjust="spacingAndGlyphs">tronix</text></g><path d="M50.6 16.4L56.2 25.8H50.4L47.4 20.6Z" fill="#ffffff"/><path d="M40.1 25.8L49.3 9.4H56L47 25.8Z" fill="#1fbcdc"/></svg>
<div class="a" style="left:1770px;top:29px;width:150px;text-align:center;font-size:16.5px;font-weight:bold;color:#e8e8e8;line-height:19px;letter-spacing:0px">Add New...</div>
<div class="btn" style="left:1778px;top:54px;width:63px;height:37px">Cursors</div>
<div class="btn" style="left:1850px;top:54px;width:63px;height:37px">Callout</div>
<div class="btn" style="left:1778px;top:100px;width:63px;height:37px">Measure</div>
<div class="btn" style="left:1850px;top:100px;width:63px;height:37px">Search</div>
<div class="btn" style="left:1778px;top:146px;width:63px;height:37px">Results<br>Table</div>
<div class="btn" style="left:1850px;top:146px;width:63px;height:37px">Plot</div>
<div class="btn" style="left:1778px;top:196px;width:63px;height:37px"></div>
<div class="btn" style="left:1850px;top:196px;width:63px;height:37px">More...</div>
<div class="a" style="left:1773px;top:189px;width:144px;height:1px;background:#5a5a5a"></div>
<div class="a" style="left:1773px;top:241px;width:144px;height:1px;background:#5a5a5a"></div>
<svg class="a" style="left:1793px;top:200px" width="34" height="30" viewBox="0 0 34 30"><rect x="5.3" y="3.3" width="21.7" height="18.5" fill="none" stroke="#cfcfcf" stroke-width="2.2" stroke-dasharray="2.6 2.4"/><circle cx="18.2" cy="11.2" r="4.6" fill="none" stroke="#c4c4c4" stroke-width="2"/><path d="M14.8 14.6L9.5 19.5" stroke="#c4c4c4" stroke-width="2.8" stroke-linecap="round"/><path d="M22.5 17L23 27L25.3 24.6L27.6 28.6L29.2 27.7L27 23.8H30.4Z" fill="#c4c4c4"/></svg>
<svg class="a" style="left:1758px;top:500px" width="8" height="26"><circle cx="4" cy="4" r="2" fill="#b0b0b0"/><circle cx="4" cy="12" r="2" fill="#b0b0b0"/><circle cx="4" cy="20" r="2" fill="#b0b0b0"/></svg>
<div class="a" style="left:3px;top:984px;width:90px;height:94px;border-radius:5px;overflow:hidden;background:#c8c8c8"><div style="height:19px;background:#1e1e1e;color:#f2f040;font-size:15px;line-height:18px;padding-left:6px;white-space:nowrap">Ch 1</div><div style="height:2px;background:#c0c0c0"></div><div style="height:17px;background:#ff0000;color:#fff;font-size:15px;line-height:18px;padding-left:18px;white-space:nowrap;overflow:hidden">Clipping</div><div style="height:1px;background:#b8b8b8;margin-bottom:-2px"></div><div style="font-size:15px;line-height:19px;padding-left:6px;color:#111;white-space:nowrap;overflow:hidden">5 V/div</div><div style="font-size:15px;line-height:19px;padding-left:6px;color:#111;white-space:nowrap;overflow:hidden">1 M&#937;</div><div style="font-size:15px;line-height:19px;padding-left:6px;color:#111;white-space:nowrap;overflow:hidden">200 kHz</div></div>
<svg class="a" style="left:4px;top:1006px" width="17" height="16"><path d="M8.5 1.5L16 15H1Z" fill="#f0e020" stroke="#3a3a6a" stroke-width="1.2" stroke-linejoin="round"/><rect x="7.7" y="5.5" width="1.6" height="7" fill="#a09a20"/></svg>
<div class="a" style="left:75px;top:1061px;font-size:10px;line-height:10px;color:#111">B</div><div class="a" style="left:80px;top:1065px;font-size:10px;line-height:10px;color:#111">w</div>
<div class="a" style="left:98px;top:1003px;width:90px;height:75px;border-radius:5px;overflow:hidden;background:#c8c8c8"><div style="height:19px;background:#1f4345;color:#2ad4dc;font-size:15px;line-height:18px;padding-left:6px;white-space:nowrap">Ch 2</div><div style="height:2px;background:#b4b4b4;margin-bottom:-2px"></div><div style="font-size:15px;line-height:19px;padding-left:6px;color:#111;white-space:nowrap">250 mV/div</div><div style="font-size:15px;line-height:19px;padding-left:6px;color:#111;white-space:nowrap">1 M&#937;</div><div style="font-size:15px;line-height:19px;padding-left:6px;color:#111;white-space:nowrap">200 kHz</div></div>
<div class="a" style="left:170px;top:1061px;font-size:10px;line-height:10px;color:#111">B</div><div class="a" style="left:175px;top:1065px;font-size:10px;line-height:10px;color:#111">w</div>
<div class="a" style="left:193px;top:1003px;width:90px;height:75px;border-radius:5px;overflow:hidden;background:#c8c8c8"><div style="height:19px;background:#4a2326;color:#f4f0f0;font-size:15px;line-height:18px;padding-left:6px;white-space:nowrap">Ch 3</div><div style="height:2px;background:#b4b4b4;margin-bottom:-2px"></div><div style="font-size:15px;line-height:19px;padding-left:6px;color:#111;white-space:nowrap">450 mV/div</div><div style="font-size:15px;line-height:19px;padding-left:6px;color:#111;white-space:nowrap">1 M&#937;</div><div style="font-size:15px;line-height:19px;padding-left:6px;color:#111;white-space:nowrap">200 kHz</div></div>
<div class="a" style="left:265px;top:1061px;font-size:10px;line-height:10px;color:#111">B</div><div class="a" style="left:270px;top:1065px;font-size:10px;line-height:10px;color:#111">w</div>
<div class="a" style="left:288px;top:1003px;width:90px;height:75px;border-radius:5px;overflow:hidden;background:#c8c8c8"><div style="height:19px;background:#35441f;color:#90d040;font-size:15px;line-height:18px;padding-left:6px;white-space:nowrap">Ch 4</div><div style="height:2px;background:#b4b4b4;margin-bottom:-2px"></div><div style="font-size:15px;line-height:19px;padding-left:6px;color:#111;white-space:nowrap">200 mV/div</div><div style="font-size:15px;line-height:19px;padding-left:6px;color:#111;white-space:nowrap">1 M&#937;</div><div style="font-size:15px;line-height:19px;padding-left:6px;color:#111;white-space:nowrap">200 kHz</div></div>
<div class="a" style="left:360px;top:1061px;font-size:10px;line-height:10px;color:#111">B</div><div class="a" style="left:365px;top:1065px;font-size:10px;line-height:10px;color:#111">w</div>
<div class="a" style="left:383px;top:1003px;width:90px;height:75px;border-radius:5px;overflow:hidden;background:#c8c8c8"><div style="height:19px;background:#4e3319;color:#f89a30;font-size:15px;line-height:18px;padding-left:6px;white-space:nowrap">Ch 5</div><div style="height:2px;background:#b4b4b4;margin-bottom:-2px"></div><div style="font-size:15px;line-height:19px;padding-left:6px;color:#111;white-space:nowrap">1 V/div</div><div style="font-size:15px;line-height:19px;padding-left:6px;color:#111;white-space:nowrap">1 M&#937;</div><div style="font-size:15px;line-height:19px;padding-left:6px;color:#111;white-space:nowrap">200 kHz</div></div>
<div class="a" style="left:455px;top:1061px;font-size:10px;line-height:10px;color:#111">B</div><div class="a" style="left:460px;top:1065px;font-size:10px;line-height:10px;color:#111">w</div>
<div class="a" style="left:478px;top:1003px;width:90px;height:75px;border-radius:5px;overflow:hidden;background:#c8c8c8"><div style="height:19px;background:#2626c4;color:#f4f4ff;font-size:15px;line-height:18px;padding-left:6px;white-space:nowrap">Ch 6</div><div style="height:2px;background:#b4b4b4;margin-bottom:-2px"></div><div style="font-size:15px;line-height:19px;padding-left:6px;color:#111;white-space:nowrap">750 mV/div</div><div style="font-size:15px;line-height:19px;padding-left:6px;color:#111;white-space:nowrap">1 M&#937;</div><div style="font-size:15px;line-height:19px;padding-left:6px;color:#111;white-space:nowrap">200 kHz</div></div>
<div class="a" style="left:550px;top:1061px;font-size:10px;line-height:10px;color:#111">B</div><div class="a" style="left:555px;top:1065px;font-size:10px;line-height:10px;color:#111">w</div>
<div class="a" style="left:573px;top:984px;width:90px;height:94px;border-radius:5px;overflow:hidden;background:#c8c8c8"><div style="height:19px;background:#4e3319;color:#f89a30;font-size:15px;line-height:18px;padding-left:6px;white-space:nowrap">Math 1</div><div style="height:2px;background:#c0c0c0"></div><div style="height:17px;background:#ff0000;color:#fff;font-size:15px;line-height:18px;padding-left:18px;white-space:nowrap;overflow:hidden">Empty i...</div><div style="height:1px;background:#b8b8b8;margin-bottom:-2px"></div><div style="font-size:15px;line-height:19px;padding-left:6px;color:#111;white-space:nowrap;overflow:hidden"><b>23.0 mT/div</b></div><div style="font-size:15px;line-height:19px;padding-left:6px;color:#111;white-space:nowrap;overflow:hidden">Intg(Ch2)...</div></div>
<svg class="a" style="left:574px;top:1006px" width="17" height="16"><path d="M8.5 1.5L16 15H1Z" fill="#f0e020" stroke="#3a3a6a" stroke-width="1.2" stroke-linejoin="round"/><rect x="7.7" y="5.5" width="1.6" height="7" fill="#a09a20"/></svg>
<div class="a" style="left:668px;top:984px;width:90px;height:94px;border-radius:5px;overflow:hidden;background:#c8c8c8"><div style="height:19px;background:#2c2236;color:#f4f4f4;font-size:15px;line-height:18px;padding-left:6px;white-space:nowrap">Math 2</div><div style="height:2px;background:#c0c0c0"></div><div style="height:17px;background:#ff0000;color:#fff;font-size:15px;line-height:18px;padding-left:18px;white-space:nowrap;overflow:hidden">Empty i...</div><div style="height:1px;background:#b8b8b8;margin-bottom:-2px"></div><div style="font-size:15px;line-height:19px;padding-left:6px;color:#111;white-space:nowrap;overflow:hidden"><b>272.79 A/...</b></div><div style="font-size:15px;line-height:19px;padding-left:6px;color:#111;white-space:nowrap;overflow:hidden">-Intg(Ch3...</div></div>
<svg class="a" style="left:669px;top:1006px" width="17" height="16"><path d="M8.5 1.5L16 15H1Z" fill="#f0e020" stroke="#3a3a6a" stroke-width="1.2" stroke-linejoin="round"/><rect x="7.7" y="5.5" width="1.6" height="7" fill="#a09a20"/></svg>
<div class="a" style="left:1129px;top:999px;width:40px;height:79px;border:1px solid #67615a;border-radius:5px;background:linear-gradient(#464646 0px,#333333 7px,#2c2c2c 85%,#1f1f1f 100%)"><div style="margin:7px 4px 0 4px;height:2px;background:#b82424"></div><div style="text-align:center;color:#f0f0f0;font-size:15px;line-height:16px;margin-top:10px">Add<br>New<br>Math</div></div>
<div class="a" style="left:1174px;top:999px;width:40px;height:79px;border:1px solid #67615a;border-radius:5px;background:linear-gradient(#464646 0px,#333333 7px,#2c2c2c 85%,#1f1f1f 100%)"><div style="margin:7px 4px 0 4px;height:2px;background:#c8c8e0"></div><div style="text-align:center;color:#f0f0f0;font-size:15px;line-height:16px;margin-top:10px">Add<br>New<br>Ref</div></div>
<div class="a" style="left:1219px;top:999px;width:40px;height:79px;border:1px solid #67615a;border-radius:5px;background:linear-gradient(#464646 0px,#333333 7px,#2c2c2c 85%,#1f1f1f 100%)"><div style="margin:7px 4px 0 4px;height:2px;background:#c864ec"></div><div style="text-align:center;color:#f0f0f0;font-size:15px;line-height:16px;margin-top:10px">Add<br>New<br>Bus</div></div>
<div class="a" style="left:1269px;top:1000px;width:1px;height:78px;background:#67625c"></div>
<div class="a" style="left:1118px;top:1000px;width:1px;height:78px;background:#67625c"></div>
<div class="a" style="left:1811px;top:1000px;width:1px;height:78px;background:#67625c"></div>
<div class="a" style="left:1281px;top:1004px;width:198px;height:74px;border-radius:5px;overflow:hidden;background:#c8c8c8;border:1px solid #262626"><div style="height:18px;background:#58585a;color:#f0f0f0;font-size:15px;line-height:17px;padding-left:5px">Horizontal</div><div style="height:1px;background:#9a9a9a;margin-bottom:-2px"></div><div style="position:relative;height:19px;font-size:15px;line-height:19px;color:#111;white-space:nowrap"><span style="position:absolute;left:4px">4 ms/div</span><span style="position:absolute;left:109px">40 ms</span></div><div style="position:relative;height:19px;font-size:15px;line-height:19px;color:#111;white-space:nowrap"><span style="position:absolute;left:4px">SR: 1 MS/s</span><span style="position:absolute;left:109px">1 &#956;s/pt</span></div><div style="position:relative;height:19px;font-size:15px;line-height:19px;color:#111;white-space:nowrap"><span style="position:absolute;left:4px">RL: 40 kpts</span><span style="position:absolute;left:109px">&#8194;&#8202; 2%</span></div></div>
<svg class="a" style="left:1389px;top:1062px" width="12" height="13"><path d="M1 1H11V9H7.5L6 12L4.5 9H1Z" fill="#000" stroke="#f5821f" stroke-width="1.5"/><text x="6" y="8" font-family="Liberation Sans" font-weight="bold" font-size="8" fill="#fff" text-anchor="middle">T</text></svg>
<div class="a" style="left:1486px;top:1004px;width:158px;height:74px;border-radius:5px;overflow:hidden;background:#c8c8c8;border:1px solid #262626"><div style="height:18px;background:#58585a;color:#f0f0f0;font-size:15px;line-height:17px;padding-left:5px">Trigger</div><div style="height:1px;background:#9a9a9a;margin-bottom:-2px"></div><div style="position:relative;height:19px"><div style="position:absolute;left:4px;top:3px;width:30px;height:16px;border-radius:6px;background:#2626c4;border:1px solid #111;color:#fff;font-size:14px;line-height:15px;text-align:center">6</div><svg style="position:absolute;left:42px;top:3px" width="18" height="14"><path d="M1 12.5H5L12 3H17" stroke="#3a3a8a" stroke-width="1.3" fill="none"/></svg><span style="position:absolute;left:69px;font-size:15px;line-height:19px;color:#111">3 V</span></div></div>
<div class="a" style="left:1651px;top:1004px;width:148px;height:74px;border-radius:5px;overflow:hidden;background:#c8c8c8;border:1px solid #262626"><div style="height:18px;background:#58585a;color:#f0f0f0;font-size:15px;line-height:17px;padding-left:5px">Acquisition</div><div style="height:1px;background:#9a9a9a;margin-bottom:-2px"></div><div style="position:relative;height:19px;font-size:15px;line-height:19px;color:#111;white-space:nowrap"><span style="position:absolute;left:4px">Manual,</span><span style="position:absolute;left:84px">Analyze</span></div><div style="position:relative;height:19px;font-size:15px;line-height:19px;color:#111;white-space:nowrap"><span style="position:absolute;left:4px">High Res: 16 bits</span><span style="position:absolute;left:84px"></span></div><div style="position:relative;height:19px;font-size:15px;line-height:19px;color:#111;white-space:nowrap"><span style="position:absolute;left:4px">Single: 1 /1</span><span style="position:absolute;left:84px"></span></div></div>
<div class="a" style="left:1822px;top:999px;width:90px;height:36px;border-radius:6px;background:#f41c24;border:1px solid #6a6a6a;color:#fff;font-weight:bold;font-size:14px;line-height:32px;text-align:center">Stopped</div>
<div class="a" style="left:1822px;top:1041px;width:90px;height:37px;border-radius:5px;background:#c8c8c8;border:1px solid #777;color:#111;font-size:14.5px;line-height:17px;text-align:center;padding-top:0px">04 Nov 2025<br>12:04:04 PM</div>
</body></html>
